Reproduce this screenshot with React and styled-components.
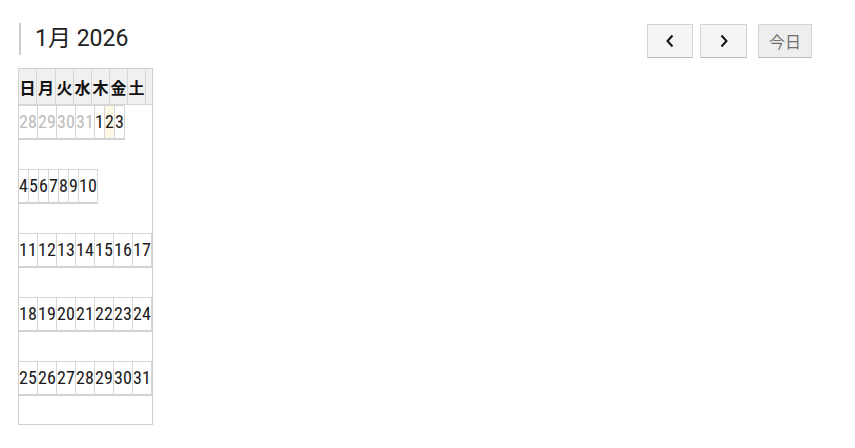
import React from "react";
import styled, { createGlobalStyle } from "styled-components";

const Global = createGlobalStyle`
  html, body { margin: 0; padding: 0; background: #fff; }
  body { font-family: Roboto, "Noto Sans CJK JP", sans-serif; color: #222; }
`;

const Calendar = styled.div`
  padding: 23px 43px 0 18px;
`;

const Toolbar = styled.div`
  display: flex;
  align-items: flex-start;
  justify-content: space-between;
  height: 45px;
`;

const Title = styled.h2`
  margin: 0 0 0 1px;
  border-left: 2px solid #ccc;
  padding-left: 14px;
  font-size: 23px;
  font-weight: 400;
  line-height: 32px;
  color: #222;
`;

const Buttons = styled.div`
  display: flex;
  align-items: center;
  margin-top: 1px;
`;

const Btn = styled.button`
  box-sizing: border-box;
  width: ${(p) => p.$w}px;
  height: 34px;
  margin-left: ${(p) => p.$ml}px;
  display: flex;
  align-items: center;
  justify-content: center;
  padding: 0;
  background: ${(p) => (p.$disabled ? "#eeeeee" : "#f5f5f5")};
  border: 1px solid #d4d4d4;
  border-bottom-color: #bdbdbd;
  border-radius: 0;
  color: ${(p) => (p.$disabled ? "#6f6f6f" : "#111")};
  font-family: "Noto Sans CJK JP", sans-serif;
  font-size: 16px;
`;

const Table = styled.div`
  width: 133px;
  border: 1px solid #cfcfcf;
`;

const HeadRow = styled.div`
  display: flex;
  height: 35px;
  border-bottom: 1px solid #d6d6d6;
  background: #f0f0f0;
`;

const HeadCell = styled.div`
  width: ${(p) => p.$w}px;
  border-right: 1px solid #d6d6d6;
  display: flex;
  align-items: center;
  justify-content: center;
  font-family: "Noto Sans CJK JP", sans-serif;
  font-weight: 700;
  font-size: 16px;
  color: #111;
`;

const HeadFill = styled.div`
  flex: 1;
`;

const Week = styled.div`
  height: ${(p) => p.$h}px;
`;

const DayRow = styled.div`
  display: inline-flex;
  border-bottom: 1px solid #cfcfcf;
`;

const Day = styled.div`
  width: ${(p) => p.$w}px;
  height: 32px;
  line-height: 32px;
  border-top: 1px solid #d6d6d6;
  border-right: 1px solid #d6d6d6;
  border-bottom: 1px solid #d6d6d6;
  font-family: "Liberation Sans Narrow", "Roboto Condensed", Roboto, sans-serif;
  font-size: 18px;
  white-space: nowrap;
  overflow: hidden;
  color: ${(p) => (p.$other ? "#bbb" : "#1a1a1a")};
  background: ${(p) => (p.$today ? "#fcf8e3" : "transparent")};
`;

const ChevronLeft = () => (
  <svg width="12" height="14" viewBox="0 0 12 14">
    <path d="M8.5 1.5 L3.5 7 L8.5 12.5" fill="none" stroke="#111" strokeWidth="2" />
  </svg>
);
const ChevronRight = () => (
  <svg width="12" height="14" viewBox="0 0 12 14">
    <path d="M3.5 1.5 L8.5 7 L3.5 12.5" fill="none" stroke="#111" strokeWidth="2" />
  </svg>
);

const heads = ["日", "月", "火", "水", "木", "金", "土"];
const headW = [17, 18, 17, 17, 17, 17, 17];

const weeks = [
  [[28, true], [29, true], [30, true], [31, true], [1], [2, false, true], [3]],
  [[4], [5], [6], [7], [8], [9], [10]],
  [[11], [12], [13], [14], [15], [16], [17]],
  [[18], [19], [20], [21], [22], [23], [24]],
  [[25], [26], [27], [28], [29], [30], [31]],
];

export default function App() {
  return (
    <>
      <Global />
      <Calendar>
        <Toolbar>
          <Title>1月 2026</Title>
          <Buttons>
            <Btn $w={46} $ml={0}><ChevronLeft /></Btn>
            <Btn $w={47} $ml={7}><ChevronRight /></Btn>
            <Btn $w={54} $ml={11} $disabled>今日</Btn>
          </Buttons>
        </Toolbar>
        <Table>
          <HeadRow>
            {heads.map((h, i) => (
              <HeadCell key={h} $w={headW[i]}>{h}</HeadCell>
            ))}
            <HeadFill />
          </HeadRow>
          {weeks.map((w, i) => (
            <Week key={i} $h={i === 4 ? 63 : 64}>
              <DayRow>
                {w.map(([d, other, today]) => (
                  <Day key={d + "-" + i} $w={d > 9 ? 18 : 9} $other={other} $today={today}>{d}</Day>
                ))}
              </DayRow>
            </Week>
          ))}
        </Table>
      </Calendar>
    </>
  );
}
